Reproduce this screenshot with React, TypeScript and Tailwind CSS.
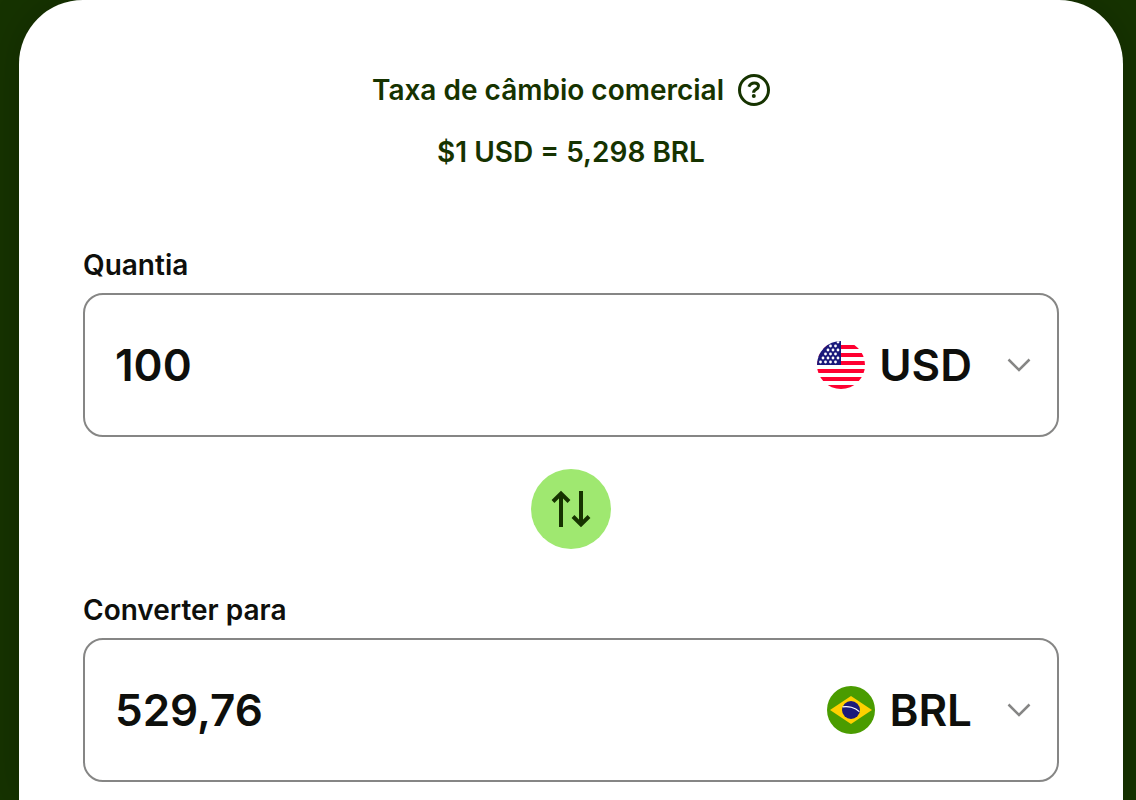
import React, { useState } from 'react';

type Currency = 'USD' | 'BRL';

const USD_TO_BRL = 5.2976;

const formatNumber = (value: number, digits: number) =>
  value.toLocaleString('pt-BR', { minimumFractionDigits: 0, maximumFractionDigits: digits });

const parseNumber = (text: string) => Number(text.replace(/\./g, '').replace(',', '.')) || 0;

const getRate = (from: Currency, to: Currency) => {
  if (from === to) return 1;
  return from === 'USD' ? USD_TO_BRL : 1 / USD_TO_BRL;
};

// Canton stars, in staggered rows
const STARS = [
  [21, 1],
  [13.5, 5], [18.5, 5],
  [11, 9], [16, 9], [21, 9],
  [8.5, 13], [13.5, 13], [18.5, 13],
  [6, 17], [11, 17], [16, 17], [21, 17],
  [3.5, 21], [8.5, 21], [13.5, 21], [18.5, 21],
];

const UsaFlag = () => (
  <svg className="size-12 shrink-0" viewBox="0 0 48 48" aria-hidden="true">
    <clipPath id="flag-usa">
      <circle cx="24" cy="24" r="24" />
    </clipPath>
    <g clipPath="url(#flag-usa)">
      <rect width="48" height="48" fill="#fff" />
      <path d="M0 4h48v4H0zM0 12h48v4H0zM0 20h48v4H0zM0 28h48v4H0zM0 36h48v4H0zM0 44h48v4H0z" fill="#ff0031" />
      <rect width="24" height="24" fill="#1a1a7b" />
      {STARS.map(([x, y]) => (
        <circle key={`${x}-${y}`} cx={x} cy={y} r="1.4" fill="#fff" />
      ))}
    </g>
  </svg>
);

const BrazilFlag = () => (
  <svg className="size-12 shrink-0" viewBox="0 0 48 48" aria-hidden="true">
    <circle cx="24" cy="24" r="24" fill="#4a9c00" />
    <path d="M3 24 24 10l21 14-21 14z" fill="#ffd100" />
    <circle cx="24" cy="24" r="9" fill="#1a1a7b" />
    <path d="M15.500 20.900C21 19.800 28 21.400 32.300 25.700" fill="none" stroke="#fff" strokeWidth="1.200" />
  </svg>
);

interface MoneyFieldProps {
  id: string;
  label: string;
  value: string;
  currency: Currency;
  readOnly?: boolean;
  onValueChange?: (value: string) => void;
  onCurrencyChange: (currency: Currency) => void;
}

const MoneyField = ({ id, label, value, currency, readOnly, onValueChange, onCurrencyChange }: MoneyFieldProps) => (
  <div>
    <label htmlFor={id} className="block text-[28px] leading-10 font-semibold">
      {label}
    </label>
    <div className="mt-2 flex h-36 items-center rounded-[20px] border-2 border-[#868685] pl-[30px] text-[44px] leading-[56px] font-semibold">
      <input
        id={id}
        type="text"
        inputMode="decimal"
        value={value}
        readOnly={readOnly}
        onChange={(e) => onValueChange?.(e.target.value)}
        className="min-w-0 flex-1 bg-transparent outline-none"
      />
      {currency === 'USD' ? <UsaFlag /> : <BrazilFlag />}
      <div className="relative">
        <select
          aria-label={`Moeda: ${label}`}
          value={currency}
          onChange={(e) => onCurrencyChange(e.target.value as Currency)}
          className="block appearance-none field-sizing-content bg-transparent pr-[85px] pl-[14px] outline-none"
        >
          <option value="USD">USD</option>
          <option value="BRL">BRL</option>
        </select>
        <svg
          className="pointer-events-none absolute inset-y-0 right-6 my-auto size-7"
          viewBox="0 0 28 28"
          fill="none"
          stroke="#868685"
          strokeWidth="2.500"
          aria-hidden="true"
        >
          <path d="m3.500 8.500 10.500 10.500L24.500 8.500" />
        </svg>
      </div>
    </div>
  </div>
);

const App = () => {
  const [amount, setAmount] = useState('100');
  const [from, setFrom] = useState<Currency>('USD');
  const [to, setTo] = useState<Currency>('BRL');

  const rate = getRate(from, to);
  const converted = formatNumber(parseNumber(amount) * rate, 2);

  const handleSwap = () => {
    setFrom(to);
    setTo(from);
  };

  return (
    <div className="min-h-screen overflow-hidden bg-[#163300] pr-[13px] pl-[19px] font-['Inter',sans-serif] text-[#0e0f0c]">
      <main className="min-h-screen rounded-t-[64px] bg-white px-16 pt-[70px] pb-[18px] shadow-[0_0_40px_rgba(0,0,0,0.2)]">
        <div className="text-center text-[28px] leading-10 font-semibold text-[#163300]">
          <div className="flex items-center justify-center gap-[14px]">
            <h1>Taxa de câmbio comercial</h1>
            <button type="button" aria-label="Sobre a taxa de câmbio" className="size-8">
              <svg viewBox="0 0 32 32" fill="none" stroke="#163300" aria-hidden="true">
                <circle cx="16" cy="16" r="14.500" strokeWidth="3" />
                <path
                  d="M10.900 12.800C11.900 10.300 14 9 16.500 9c2.400 0 4 1.200 4 3.100 0 1.700-1.100 2.500-2.500 3.300-1.500.8-2.400 1.600-2.400 3.400"
                  strokeWidth="3"
                />
                <circle cx="15.800" cy="22" r="2" fill="#163300" stroke="none" />
              </svg>
            </button>
          </div>
          <p className="mt-[22px]">
            $1 {from} = {formatNumber(rate, 3)} {to}
          </p>
        </div>

        <div className="mt-[73px]">
          <MoneyField
            id="amount"
            label="Quantia"
            value={amount}
            currency={from}
            onValueChange={setAmount}
            onCurrencyChange={setFrom}
          />
          <button
            type="button"
            onClick={handleSwap}
            aria-label="Inverter moedas"
            className="mx-auto mt-8 mb-[41px] flex size-20 items-center justify-center rounded-full bg-[#9fe870]"
          >
            <svg className="size-12" viewBox="0 0 48 48" fill="none" stroke="#163300" strokeWidth="4" aria-hidden="true">
              <path d="M14 42V9M6 16.500l8-8 8 8M34 6v33M26 31.500l8 8 8-8" />
            </svg>
          </button>
          <MoneyField
            id="converted"
            label="Converter para"
            value={converted}
            currency={to}
            readOnly
            onCurrencyChange={setTo}
          />
        </div>
      </main>
    </div>
  );
};

export default App;
